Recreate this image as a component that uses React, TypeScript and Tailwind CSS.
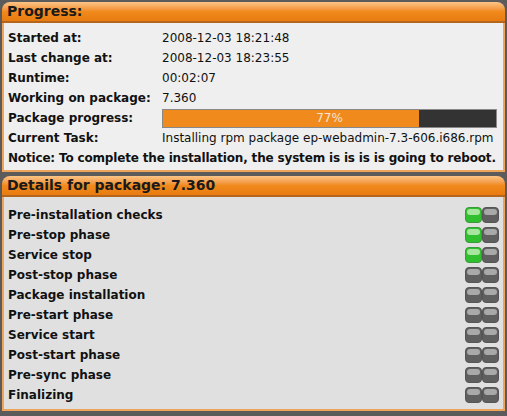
const progressRows = [
  { label: "Started at:", value: "2008-12-03 18:21:48" },
  { label: "Last change at:", value: "2008-12-03 18:23:55" },
  { label: "Runtime:", value: "00:02:07" },
  { label: "Working on package:", value: "7.360" },
];

const steps = [
  { name: "Pre-installation checks", done: 1 },
  { name: "Pre-stop phase", done: 1 },
  { name: "Service stop", done: 1 },
  { name: "Post-stop phase", done: 0 },
  { name: "Package installation", done: 0 },
  { name: "Pre-start phase", done: 0 },
  { name: "Service start", done: 0 },
  { name: "Post-start phase", done: 0 },
  { name: "Pre-sync phase", done: 0 },
  { name: "Finalizing", done: 0 },
];

function Led({ on }: { on: boolean }) {
  return (
    <div
      className={
        "relative w-[17px] h-[16px] rounded-[4px] border overflow-hidden " +
        (on ? "bg-[#2fbf2f] border-[#3a9a3a]" : "bg-[#5f5f5f] border-[#555]")
      }
    >
      <div
        className={
          "absolute left-[1px] right-[1px] top-[1px] h-[6px] rounded-[3px] " +
          (on ? "bg-[#a8e6a0]" : "bg-[#a9a9a9]")
        }
      />
    </div>
  );
}

function Header({ children }: { children: React.ReactNode }) {
  return (
    <div className="h-[21px] rounded-t-[8px] bg-gradient-to-b from-[#fbc485] via-[#f08a1c] to-[#e97b10] border-b-2 border-[#b4661c] px-[5px] flex items-center text-[14px] font-bold text-[#1a1a1a]">
      {children}
    </div>
  );
}

export default function App() {
  return (
    <div
      className="w-[507px] h-[416px] bg-[#5b5b5b] p-[2px] flex flex-col gap-[4px]"
      style={{ fontFamily: '"DejaVu Sans", Verdana, sans-serif' }}
    >
      <div className="flex flex-col">
        <Header>Progress:</Header>
        <div className="bg-[#efefef] border-x-2 border-b-2 border-[#eea45a] px-[4px] pt-[5px] pb-[2px] text-[12px] text-[#111]">
          {progressRows.map((r) => (
            <div key={r.label} className="flex h-[20px] items-center">
              <div className="w-[154px] font-bold">{r.label}</div>
              <div>{r.value}</div>
            </div>
          ))}
          <div className="flex h-[20px] items-center">
            <div className="w-[154px] font-bold">Package progress:</div>
            <div className="relative w-[335px] h-[19px] bg-[#333] border border-[#888] flex">
              <div className="w-[77%] bg-[#f08a1c]" />
              <div className="absolute inset-0 flex items-center justify-center text-[#f6e6d2] text-[12px]">77%</div>
            </div>
          </div>
          <div className="flex h-[20px] items-center">
            <div className="w-[154px] font-bold">Current Task:</div>
            <div>Installing rpm package ep-webadmin-7.3-606.i686.rpm</div>
          </div>
          <div className="flex h-[20px] items-center font-bold whitespace-nowrap tracking-[-0.17px]">
            Notice: To complete the installation, the system is is is is going to reboot.
          </div>
        </div>
      </div>
      <div className="flex flex-col">
        <Header>Details for package: 7.360</Header>
        <div className="bg-[#e0e0e0] border-x-2 border-b-2 border-[#eea45a] px-[4px] pt-[8px] pb-[4px] text-[12px] text-[#111]">
          {steps.map((s) => (
            <div key={s.name} className="flex h-[20px] items-center justify-between pr-[0px]">
              <div className="font-bold">{s.name}</div>
              <div className="flex">
                <Led on={s.done === 1} />
                <Led on={false} />
              </div>
            </div>
          ))}
        </div>
      </div>
    </div>
  );
}
